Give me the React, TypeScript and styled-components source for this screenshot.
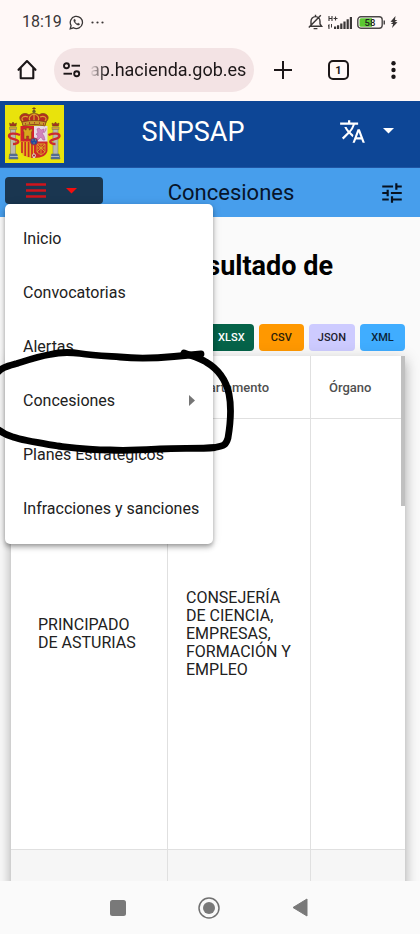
import React from "react";
import styled, { createGlobalStyle } from "styled-components";

const GlobalStyle = createGlobalStyle`
  *, *::before, *::after { box-sizing: border-box; }
  body { margin: 0; font-family: Roboto, "Liberation Sans", sans-serif; color: #202020; }
  button { font-family: inherit; border: 0; padding: 0; margin: 0; background: none; color: inherit; cursor: pointer; }
  svg { display: block; flex: none; }
`;

const Page = styled.div`
  position: relative;
  display: flex;
  flex-direction: column;
  height: 100vh;
  overflow: hidden;
  background: #fafafa;
`;

const StatusBar = styled.div`
  display: flex;
  align-items: center;
  justify-content: space-between;
  height: 44px;
  padding: 0 22px;
  background: #fff8f7;
  color: #3a3636;
  font-size: 16px;
`;

const StatusGroup = styled.div<{ $gap: number }>`
  display: flex;
  align-items: center;
  gap: ${(p) => p.$gap}px;
`;

const Clock = styled.time`
  font-size: 16px;
  line-height: 20px;
`;

const BrowserBar = styled.div`
  display: flex;
  align-items: center;
  justify-content: space-between;
  height: 57px;
  padding: 0 14px 6px;
  background: #fff8f7;
  color: #1c1718;
`;

const IconButton = styled.button`
  display: flex;
  flex: none;
  align-items: center;
  justify-content: center;
  width: 26px;
  height: 32px;
`;

const AddressPill = styled.label`
  display: flex;
  align-items: center;
  flex: 1;
  min-width: 0;
  gap: 9px;
  height: 44px;
  margin: 0 16px 0 14px;
  padding: 0 8px;
  border-radius: 22px;
  background: #f3e3e4;
`;

const AddressInput = styled.input`
  flex: 1;
  min-width: 0;
  height: 32px;
  padding: 0;
  border: 0;
  outline: 0;
  background: none;
  color: #1c1718;
  font-family: Roboto, sans-serif;
  font-size: 18px;
  text-align: right;
  mask-image: linear-gradient(to right, transparent, #000 16px);
`;

const BrowserActions = styled.div`
  display: flex;
  flex: none;
  align-items: center;
  gap: 29px;
`;

const Header = styled.header`
  display: flex;
  align-items: center;
  height: 67px;
  padding-left: 5px;
  background: #0d4696;
  border-bottom: 1px solid #1f55a4;
  color: #fff;
`;

const HeaderTitle = styled.h1`
  flex: 1;
  margin: 0;
  font-size: 27px;
  font-weight: 400;
  line-height: 32px;
  padding-bottom: 4px;
  text-align: center;
`;

const LanguageButton = styled.button`
  display: flex;
  align-items: center;
  justify-content: space-between;
  width: 98px;
  height: 48px;
  padding: 0 26px 6px 17px;
`;

const SubBar = styled.div`
  position: relative;
  z-index: 2;
  display: flex;
  align-items: center;
  height: 49px;
  padding-left: 5px;
  background: #479eec;
`;

const MenuButton = styled.button`
  display: flex;
  align-items: center;
  gap: 20px;
  width: 98px;
  height: 27px;
  margin-bottom: 4px;
  padding-left: 21px;
  border-radius: 4px;
  background: #1a3650;
`;

const SubTitle = styled.h2`
  flex: 1;
  margin: 0;
  font-size: 22px;
  font-weight: 400;
  line-height: 26px;
  text-align: center;
  color: #07142a;
`;

const FilterButton = styled.button`
  display: flex;
  align-items: center;
  width: 61px;
  height: 40px;
  padding-left: 20px;
`;

const Menu = styled.nav`
  position: absolute;
  top: 36px;
  left: 5px;
  width: 208px;
  padding: 7px 0 9px;
  border-radius: 5px;
  background: #fff;
  box-shadow: 0 2px 4px -1px rgba(0, 0, 0, 0.25), 0 4px 5px rgba(0, 0, 0, 0.16), 0 1px 10px rgba(0, 0, 0, 0.14);
`;

const MenuItem = styled.a`
  display: flex;
  align-items: center;
  justify-content: space-between;
  height: 54px;
  padding: 0 18px;
  color: #212121;
  font-size: 16px;
  text-decoration: none;
  white-space: nowrap;
`;

const Content = styled.main`
  flex: 1;
  min-height: 0;
  padding: 31px 15px 0 11px;
  overflow: hidden;
`;

const PageHeading = styled.h2`
  margin: 0;
  padding-right: 72px;
  color: #000;
  font-size: 27px;
  font-weight: 700;
  line-height: 36px;
  text-align: right;
`;

const ExportBar = styled.div`
  display: flex;
  justify-content: flex-end;
  gap: 5px;
  margin: 40px 0 5px;
`;

const ExportButton = styled.button<{ $bg: string; $fg: string }>`
  min-width: 45px;
  height: 27px;
  padding: 0 9px;
  border-radius: 4px;
  background: ${(p) => p.$bg};
  color: ${(p) => p.$fg};
  font-size: 11px;
  font-weight: 500;
`;

const TableCard = styled.div`
  position: relative;
  background: #fff;
  box-shadow: 0 5px 5px -3px rgba(0, 0, 0, 0.2), 0 8px 10px 1px rgba(0, 0, 0, 0.14), 0 3px 14px 2px rgba(0, 0, 0, 0.14);
`;

const Scrollbar = styled.div`
  position: absolute;
  top: 0;
  right: 0;
  width: 4px;
  height: 150px;
  background: #c0c0c0;
`;

const Table = styled.table`
  width: 100%;
  table-layout: fixed;
  border-collapse: separate;
  border-spacing: 0;
`;

const HeadCell = styled.th<{ $width?: number }>`
  width: ${(p) => (p.$width ? `${p.$width}px` : "auto")};
  height: 63px;
  padding: 0 18px;
  border-bottom: 1px solid #e0e0e0;
  border-right: 1px solid #e0e0e0;
  color: #505050;
  font-size: 13px;
  font-weight: 500;
  text-align: left;
  &:last-child { border-right: 0; }
`;

const Row = styled.tr<{ $striped?: boolean }>`
  background: ${(p) => (p.$striped ? "#f6f6f6" : "#fff")};
`;

const Cell = styled.td`
  height: 431px;
  padding: 0 18px;
  border-bottom: 1px solid #e0e0e0;
  border-right: 1px solid #e0e0e0;
  color: #212121;
  font-size: 16px;
  line-height: 18px;
  vertical-align: middle;
  &:first-child { padding: 0 27px; }
  &:last-child { border-right: 0; }
`;

const NavBar = styled.footer`
  display: flex;
  align-items: center;
  justify-content: center;
  gap: 65px;
  height: 53px;
  padding-right: 3px;
  background: #fafafa;
`;

const NavButton = styled.button`
  display: flex;
  justify-content: center;
  width: 26px;
`;

const InkOverlay = styled.svg`
  position: absolute;
  z-index: 5;
  top: 340px;
  left: 0;
  pointer-events: none;
`;

const MENU_ITEMS = [
  { label: "Inicio" },
  { label: "Convocatorias" },
  { label: "Alertas" },
  { label: "Concesiones", submenu: true },
  { label: "Planes Estratégicos" },
  { label: "Infracciones y sanciones" },
];

const EXPORTS = [
  { label: "XLSX", bg: "#056349", fg: "#ffffff" },
  { label: "CSV", bg: "#ff9800", fg: "#2b1d08" },
  { label: "JSON", bg: "#cdcbff", fg: "#1c1b2e" },
  { label: "XML", bg: "#40adff", fg: "#0b2338" },
];

const Caret = ({ color }: { color: string }) => (
  <svg width="11" height="6" viewBox="0 0 11 6"><path d="M0 0h11L5.500 5.500z" fill={color} /></svg>
);

const WhatsAppIcon = () => (
  <svg width="15" height="15" viewBox="0 0 15 15" fill="none" stroke="#3a3636">
    <path d="M1.200 13.800l.9-3.300a6.100 6.100 0 1 1 2.400 2.300z" strokeWidth="1.300" />
    <path d="M5.100 4.300c-.8.8-.5 2.200 1 3.900 1.600 1.700 3.300 2.500 4.300 1.600l.4-.8-1.700-1-.9.800c-1-.4-1.700-1.100-2.200-2l.7-.8-.7-1.800z" fill="#3a3636" strokeWidth=".3" />
  </svg>
);

const StatusIcons = () => (
  <>
    <svg width="15" height="16" viewBox="0 0 15 16" fill="none" stroke="#3a3636" strokeWidth="1.400">
      <path d="M3 12V7.200C3 4.600 4.800 2.600 7.500 2.600S12 4.600 12 7.200V10l1.700 2.300H1.500zM7.500 2.600V.8M5.600 14.600h3.800M.8 13.500L12.800 1.200" />
    </svg>
    <svg width="26" height="15" viewBox="0 0 26 15" fill="#3a3636">
      <path d="M2 1v5M5 1v5M2 3.500h3M6.500 3.500h4M8.500 1.500v4" stroke="#3a3636" strokeWidth="1.100" />
      <path d="M1 10l1.500-1v5H1.500zM4 9h1v3l-1 1zM7 11.500h2.200V14H7zM10 10.200h2.200V14H10zM13.200 8.500h2.200V14h-2.200zM16.400 6.500h2.200V14h-2.200zM19.600 4.300h2.200V14h-2.200zM22.800 2H25v12h-2.200z" />
    </svg>
    <svg width="29" height="13" viewBox="0 0 29 13">
      <rect x=".8" y=".8" width="24.400" height="11.400" rx="3" fill="#fff8f7" stroke="#4a4646" strokeWidth="1.400" />
      <path d="M4 2.200h11v8.600H4a1.500 1.500 0 0 1-1.500-1.500V3.700A1.500 1.500 0 0 1 4 2.200z" fill="#5bc832" />
      <path d="M26.500 4.500h1.500v4h-1.500z" fill="#4a4646" />
      <text x="13" y="10" fontSize="9.500" fontWeight="500" textAnchor="middle" fill="#222">58</text>
    </svg>
    <svg width="8" height="12" viewBox="0 0 8 12" fill="#3a3636"><path d="M5.500 0L.5 5.800l2.700.2L.8 8h2.300L2 12l5.500-5.700-2.700-.2L7.300 4H5z" /></svg>
  </>
);

const CoatOfArms = () => (
  <svg width="59" height="58" viewBox="0 0 59 58" role="img" aria-label="Escudo de España">
    <path d="M0 0h59v58H0z" fill="#e9e30c" />
    <g fill="#bcb9ae" stroke="#777565" strokeWidth=".5">
      <path d="M5.500 24h5v26h-5zM48 24h5v26h-5z" />
      <path d="M4.500 22h7v2.500h-7zM47 22h7v2.500h-7z" fill="#d3a438" />
    </g>
    <path d="M4.500 49h7.500l1 5H4zM46.500 49H54l1 5h-9z" fill="#506b9a" stroke="#63706a" strokeWidth=".6" />
    <path d="M5 51.500h8M46 51.500h8" stroke="#c9ccc7" strokeWidth=".8" />
    <path d="M5 21l-.5-3 2 1L8 17l1.500 2 2-1-.5 3zM47.500 21l-.5-3 2 1 1.500-2 1.500 2 2-1-.5 3z" fill="#a53222" stroke="#6c4a13" strokeWidth=".5" />
    <path d="M15 30c-5-2-11-2-11 1s7 3 9 5c1 2-2 3-5 3M43.500 30c5-2 11-2 11 1s-7 3-9 5c-1 2 2 3 5 3" fill="none" stroke="#cc2b2e" strokeWidth="2.400" />
    <path d="M15.500 21h13.500v16H15.500z" fill="#d3222d" />
    <path d="M29 21h13.500v16H29z" fill="#e6dbe3" />
    <path d="M15.500 36.500H29V53c-8 0-13.500-3-13.500-8z" fill="#e5b51a" />
    <path d="M29 36.500h13.500V45c0 5-5.500 8-13.500 8z" fill="#cf2a28" />
    <path d="M17 37v11M20.200 37v14M23.600 37v15M27 37v16" stroke="#cb2b25" strokeWidth="1.700" />
    <path d="M19 34v-7l-.8-1v-2h2v1h1v-2h3v2h1v-1h2v2l-.8 1v7h-2.800v-3h-2v3z" fill="#d9a51d" stroke="#794a10" strokeWidth=".5" />
    <path d="M32 24l2-1 2 2 3-1v3l-2 1 2 3 1 4h-2l-2-3-3 3h-2l2-4-2-2 2-1zM39 28l2-3v-2" fill="#d184bb" stroke="#b55c9f" strokeWidth=".6" />
    <path d="M32 39h8v8l-4 3-4-3zM32 39l8 8M40 39l-8 8M36 39v10M32 43h8" fill="none" stroke="#d7ac25" strokeWidth=".9" />
    <path d="M27 50l2-2 2 2-1 3h-2z" fill="#ddd5c7" /><circle cx="29" cy="50.500" r="1" fill="#a52525" />
    <circle cx="29" cy="36.500" r="3.600" fill="#214aa0" stroke="#b32a38" strokeWidth=".9" />
    <path d="M27.500 35h.8M30 35h.8M28.600 38h.9" stroke="#d5bd4b" />
    <path d="M17 17c-6-6 2-11 7-7 2-2 8-2 10 0 5-4 13 1 7 7l-1 3H18z" fill="#b42c20" stroke="#885516" strokeWidth=".9" />
    <path d="M18 16c-3-3 1-6 5-4M40 16c3-3-1-6-5-4M25 16c-2-3 0-6 4-7 4 1 6 4 4 7M29 9v7" fill="none" stroke="#d9a32b" strokeWidth="1.200" />
    <path d="M17 17c8-2 16-2 24 0l-1 4c-8-2-14-2-22 0z" fill="#c99c2c" stroke="#7b4415" strokeWidth=".7" />
    <path d="M20 18.800h1M24 18h1M29 17.800h1M34 18.200h1M38 19h1" stroke="#ab2226" strokeWidth="1.300" />
    <circle cx="29" cy="6.500" r="1.700" fill="#6c6b27" /><path d="M29 2v5M27.300 3.500h3.400" stroke="#7c481c" />
  </svg>
);

export default function App() {
  return (
    <>
      <GlobalStyle />
      <Page>
        <StatusBar>
          <StatusGroup $gap={7}>
            <Clock>18:19</Clock>
            <WhatsAppIcon />
            <svg width="13" height="3" viewBox="0 0 13 3" fill="#3a3636"><circle cx="1.500" cy="1.500" r="1.100" /><circle cx="6.500" cy="1.500" r="1.100" /><circle cx="11.500" cy="1.500" r="1.100" /></svg>
          </StatusGroup>
          <StatusGroup $gap={4}><StatusIcons /></StatusGroup>
        </StatusBar>

        <BrowserBar>
          <IconButton aria-label="Página principal">
            <svg width="20" height="21" viewBox="0 0 20 21" fill="none" stroke="currentColor" strokeWidth="2.100" strokeLinejoin="round" strokeLinecap="round">
              <path d="M1.500 10.800L10 2l8.500 8.800M3.700 9v10.200h12.600V9" />
            </svg>
          </IconButton>
          <AddressPill>
            <svg width="19" height="16" viewBox="0 0 19 16" fill="none" stroke="currentColor" strokeWidth="1.900">
              <circle cx="4.500" cy="3.700" r="2.500" /><path d="M9.500 3.700H18" /><circle cx="14.700" cy="11.700" r="2.500" /><path d="M1.500 11.700H10" />
            </svg>
            <AddressInput type="text" aria-label="Dirección web" defaultValue="ap.hacienda.gob.es" />
          </AddressPill>
          <BrowserActions>
            <IconButton aria-label="Nueva pestaña">
              <svg width="18" height="18" viewBox="0 0 18 18"><path d="M9 0v18M0 9h18" stroke="currentColor" strokeWidth="2" /></svg>
            </IconButton>
            <IconButton aria-label="Pestañas">
              <svg width="21" height="20" viewBox="0 0 21 20">
                <rect x="1" y="1" width="19" height="18" rx="4" fill="none" stroke="currentColor" strokeWidth="2" />
                <text x="10.500" y="14" fontSize="11" fontWeight="700" textAnchor="middle" fill="currentColor">1</text>
              </svg>
            </IconButton>
            <IconButton aria-label="Más opciones">
              <svg width="5" height="18" viewBox="0 0 5 18" fill="currentColor"><circle cx="2.500" cy="2.300" r="2.200" /><circle cx="2.500" cy="9" r="2.200" /><circle cx="2.500" cy="15.700" r="2.200" /></svg>
            </IconButton>
          </BrowserActions>
        </BrowserBar>

        <Header>
          <CoatOfArms />
          <HeaderTitle>SNPSAP</HeaderTitle>
          <LanguageButton aria-label="Idioma">
            <svg width="27" height="27" viewBox="0 0 24 24" fill="#fff">
              <path d="M12.870 15.070l-2.540-2.510.03-.03A17.520 17.520 0 0 0 14.070 6H17V4h-7V2H8v2H1v1.990h11.170C11.500 7.920 10.440 9.750 9 11.350 8.070 10.320 7.300 9.190 6.690 8h-2c.73 1.630 1.730 3.170 2.980 4.560l-5.090 5.020L4 19l5-5 3.110 3.110.76-2.040zM18.500 10h-2L12 22h2l1.120-3h4.750L21 22h2l-4.500-12zm-2.620 7l1.620-4.330L19.120 17h-3.240z" />
            </svg>
            <Caret color="#fff" />
          </LanguageButton>
        </Header>

        <SubBar>
          <MenuButton aria-label="Menú" aria-expanded="true">
            <svg width="20" height="15" viewBox="0 0 20 15"><path d="M0 1.500h20M0 7.500h20M0 13.500h20" stroke="#d0141b" strokeWidth="2.400" /></svg>
            <Caret color="#f40d0d" />
          </MenuButton>
          <SubTitle>Concesiones</SubTitle>
          <FilterButton aria-label="Filtros">
            <svg width="26" height="26" viewBox="0 0 24 24" fill="#07111f">
              <path d="M3 17v2h6v-2H3zM3 5v2h10V5H3zm10 16v-2h8v-2h-8v-2h-2v6h2zM7 9v2H3v2h4v2h2V9H7zm14 4v-2H11v2h10zm-6-4h2V7h4V5h-4V3h-2v6z" />
            </svg>
          </FilterButton>
          <Menu>
            {MENU_ITEMS.map((item) => (
              <MenuItem key={item.label} href="#">
                {item.label}
                {item.submenu && <svg width="6" height="11" viewBox="0 0 6 11"><path d="M0 0l6 5.500L0 11z" fill="#757575" /></svg>}
              </MenuItem>
            ))}
          </Menu>
        </SubBar>

        <Content>
          <PageHeading>Resultado de</PageHeading>
          <ExportBar>
            {EXPORTS.map((e) => (
              <ExportButton key={e.label} $bg={e.bg} $fg={e.fg}>{e.label}</ExportButton>
            ))}
          </ExportBar>
          <TableCard>
            <Table>
              <thead>
                <tr>
                  <HeadCell $width={157} aria-label="Administración" />
                  <HeadCell $width={143}>Departamento</HeadCell>
                  <HeadCell>Órgano</HeadCell>
                </tr>
              </thead>
              <tbody>
                <Row>
                  <Cell>PRINCIPADO DE ASTURIAS</Cell>
                  <Cell>CONSEJERÍA DE CIENCIA, EMPRESAS, FORMACIÓN Y EMPLEO</Cell>
                  <Cell />
                </Row>
                <Row $striped><Cell /><Cell /><Cell /></Row>
              </tbody>
            </Table>
            <Scrollbar />
          </TableCard>
        </Content>

        <NavBar>
          <NavButton aria-label="Recientes"><svg width="16" height="16" viewBox="0 0 16 16"><rect width="16" height="16" rx="2.500" fill="#797979" /></svg></NavButton>
          <NavButton aria-label="Inicio del teléfono">
            <svg width="22" height="22" viewBox="0 0 22 22"><circle cx="11" cy="11" r="10" fill="none" stroke="#717171" strokeWidth="1.500" /><circle cx="11" cy="11" r="6" fill="#797979" /></svg>
          </NavButton>
          <NavButton aria-label="Atrás"><svg width="16" height="19" viewBox="0 0 16 19"><path d="M15 1v17L1 9.500z" fill="#797979" stroke="#797979" strokeLinejoin="round" /></svg></NavButton>
        </NavBar>

        <InkOverlay width="240" height="130" viewBox="0 0 240 130" fill="none" stroke="#000" strokeWidth="6.800" strokeLinecap="round" strokeLinejoin="round" aria-hidden="true">
          <path d="M-4 34C2 27 8 26 17 23.500C28 20 38 16.500 50 14.500C60 12 70 12 80 13.500C92 15.500 105 16 120 17C140 19 158 18 174 16.500L201 14" />
          <path d="M184 13C192 16 200 18 206 22C218 29 226 40 229 54C232 69 230 86 228 98C226 105 224 106 215 107.500C200 109 180 108 160 109C142 110 127 111 110 110C90 110 75 108 58 106C40 103 25 101 13 97C5 95 1 92 -4 88" />
        </InkOverlay>
      </Page>
    </>
  );
}
